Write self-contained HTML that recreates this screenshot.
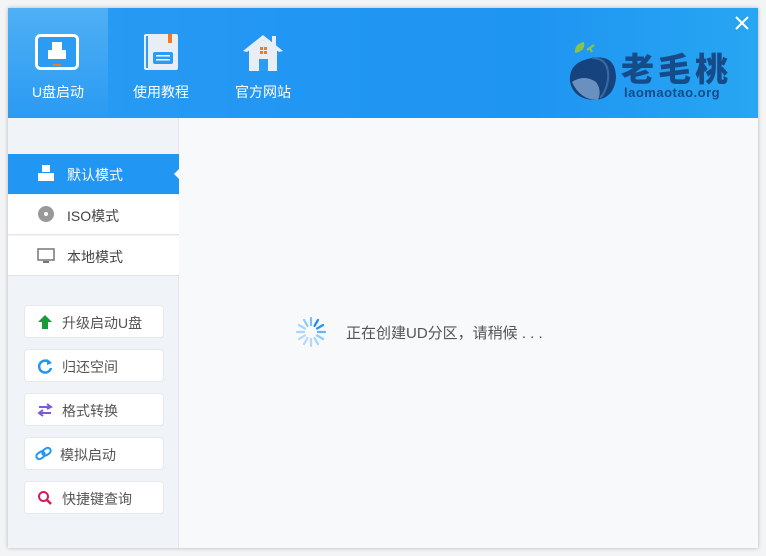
<!DOCTYPE html>
<html><head><meta charset="utf-8"><style>
*{margin:0;padding:0;box-sizing:border-box}
body{width:766px;height:556px;background:#f3f4f6;font-family:"Liberation Sans","Noto Sans CJK SC",sans-serif;position:relative;overflow:hidden}
.win{position:absolute;left:8px;top:8px;width:750px;height:540px;background:#f8f9fb;box-shadow:0 0 4px rgba(0,0,0,.25)}
.hdr{position:absolute;left:0;top:0;width:750px;height:110px;background:linear-gradient(90deg,#2a9cf3 0%,#2196f3 40%,#1f95f2 70%,#27a6f2 100%)}
.hl{position:absolute;left:0;top:0;width:100px;height:110px;background:linear-gradient(180deg,#4fb0f5,#2a9af3)}
.nav{position:absolute;top:0;height:110px;text-align:center;color:#fff;font-size:14px}
.nav span{position:absolute;left:0;right:0;top:74px}
.side{position:absolute;left:0;top:110px;width:171px;height:430px;background:#f0f3f7;border-right:1px solid #e2e6ea}
.mode{position:absolute;left:0;width:171px;height:40px;background:#fff;border-bottom:1px solid #e3e6ea;font-size:14px;color:#444}
.mode span{position:absolute;left:59px;top:11px}
.btn{position:absolute;left:16px;width:140px;height:33px;background:#fff;border:1px solid #e5e8ec;border-radius:4px;font-size:14px;color:#555}
.btn span{position:absolute;left:37px;top:7px}
.btn svg{position:absolute;left:12px;top:8px}
</style></head><body>
<div class="win">
<div class="hdr">
<div class="hl"></div>
<div class="nav" style="left:0;width:100px">
<svg width="46" height="40" style="position:absolute;left:27px;top:26px"><rect x="1.5" y="1.5" width="41" height="33" rx="4" fill="#2a9cf3" stroke="#fff" stroke-width="3"/><rect x="17" y="8" width="10" height="8" fill="#fff"/><rect x="13" y="16" width="18" height="9" fill="#fff"/><rect x="18" y="30" width="8" height="2" fill="#f07a28"/></svg>
<span>U盘启动</span></div>
<div class="nav" style="left:103px;width:100px">
<svg width="36" height="38" style="position:absolute;left:33px;top:26px"><rect x="0" y="0" width="34" height="36" rx="2" fill="#e8eef4"/><rect x="2" y="2" width="2" height="32" fill="#2a9cf3"/><rect x="24" y="0" width="4" height="9" fill="#f07a28"/><rect x="9" y="18" width="20" height="12" rx="2" fill="#2a9cf3"/><rect x="12" y="21" width="14" height="1.5" fill="#fff"/><rect x="12" y="25" width="14" height="1.5" fill="#fff"/></svg>
<span>使用教程</span></div>
<div class="nav" style="left:205px;width:100px">
<svg width="44" height="38" style="position:absolute;left:28px;top:26px"><rect x="31" y="2" width="4" height="10" fill="#e8eef4"/><path d="M2 17 L22 1 L42 17 L38 18 L22 6 L6 18Z" fill="#e8eef4"/><path d="M8 16 L22 6 L36 16 V37 H8Z" fill="#e8eef4"/><rect x="18" y="25" width="9" height="12" fill="#2a9cf3"/><rect x="19" y="13" width="3" height="3" fill="#f07a28"/><rect x="23" y="13" width="3" height="3" fill="#f07a28"/><rect x="19" y="17" width="3" height="3" fill="#f07a28"/><rect x="23" y="17" width="3" height="3" fill="#f07a28"/></svg>
<span>官方网站</span></div>
<svg width="52" height="64" style="position:absolute;left:560px;top:32px">
<path d="M7 13 Q6 4 16 2 Q18 11 7 13Z" fill="#8bc34a"/><path d="M19 10 L26 5 M22 8 L24 12" stroke="#8bc34a" stroke-width="2"/>
<path d="M24 18 Q48 14 48 38 Q46 58 28 60 Q6 60 2 42 Q0 22 24 18Z" fill="#16437e"/>
<path d="M24 18 Q42 18 40 40 Q38 52 32 58" fill="none" stroke="#3a6aa6" stroke-width="2"/>
<path d="M4 42 Q12 60 30 60 Q34 50 28 42 Q16 34 4 42Z" fill="#6a90bf"/>
</svg>
<div style="position:absolute;left:613px;top:44px;color:#164a88;font-size:33px;font-weight:900;letter-spacing:4px;line-height:36px">老毛桃</div>
<div style="position:absolute;left:616px;top:77px;color:#164a88;font-size:13px;font-weight:bold;letter-spacing:0.5px">laomaotao.org</div>
<svg width="14" height="14" style="position:absolute;left:727px;top:8px"><path d="M1 1 L13 13 M13 1 L1 13" stroke="#fff" stroke-width="2"/></svg>
</div>
<div class="side">
<div class="mode" style="top:36px;background:#2196f3;color:#fff;border:none"><svg width="20" height="18" style="position:absolute;left:29px;top:11px"><rect x="5" y="0" width="8" height="7" fill="#fff"/><rect x="1" y="8" width="16" height="8" fill="#fff"/></svg><span>默认模式</span><div style="position:absolute;right:0;top:15px;width:0;height:0;border-top:5px solid transparent;border-bottom:5px solid transparent;border-right:5px solid #f8f9fb"></div></div>
<div class="mode" style="top:77px"><svg width="18" height="18" style="position:absolute;left:30px;top:11px"><circle cx="8" cy="8" r="8" fill="#999"/><circle cx="8" cy="8" r="2" fill="#fff"/></svg><span>ISO模式</span></div>
<div class="mode" style="top:118px;border-bottom:1px solid #dde1e5"><svg width="20" height="18" style="position:absolute;left:29px;top:12px"><rect x="1" y="1" width="16" height="11" fill="none" stroke="#777" stroke-width="1.5"/><rect x="6" y="13" width="6" height="2" fill="#777"/></svg><span>本地模式</span></div>
<div class="btn" style="top:187px"><svg width="16" height="16"><path d="M8 1 L15 8 H11 V15 H5 V8 H1Z" fill="#1a9a3a"/></svg><span>升级启动U盘</span></div>
<div class="btn" style="top:231px"><svg width="16" height="16"><path d="M13 5 A6 6 0 1 0 14 10" fill="none" stroke="#2196f3" stroke-width="2.5"/><path d="M10 1 L15 5 L10 7Z" fill="#2196f3"/></svg><span>归还空间</span></div>
<div class="btn" style="top:275px"><svg width="16" height="16"><path d="M2 5 H13 M10 2 L14 5 L10 7 M14 11 H3 M6 8 L2 11 L6 14" fill="none" stroke="#7b5bd6" stroke-width="2"/></svg><span>格式转换</span></div>
<div class="btn" style="top:319px"><svg width="18" height="16" style="left:10px"><rect x="1" y="6" width="9" height="6" rx="3" transform="rotate(-35 6 9)" fill="none" stroke="#2196f3" stroke-width="2"/><rect x="7" y="3" width="9" height="6" rx="3" transform="rotate(-35 11 6)" fill="none" stroke="#2196f3" stroke-width="2"/></svg><span style="left:35px">模拟启动</span></div>
<div class="btn" style="top:363px"><svg width="16" height="16"><circle cx="6.5" cy="6.5" r="4.5" fill="none" stroke="#d81b60" stroke-width="2"/><path d="M10 10 L14 14" stroke="#d81b60" stroke-width="2.5"/></svg><span>快捷键查询</span></div>
</div>
<svg width="34" height="34" style="position:absolute;left:286px;top:307px" viewBox="-17 -17 34 34" stroke-width="2.2" stroke-linecap="round">
<line x1="0" y1="-7" x2="0" y2="-14" stroke="#7cc0f3"/>
<line x1="3.5" y1="-6.06" x2="7" y2="-12.1" stroke="#1e88e5"/>
<line x1="6.06" y1="-3.5" x2="12.1" y2="-7" stroke="#2196f3"/>
<line x1="7" y1="0" x2="14" y2="0" stroke="#64b5f6"/>
<line x1="6.06" y1="3.5" x2="12.1" y2="7" stroke="#90caf9"/>
<line x1="3.5" y1="6.06" x2="7" y2="12.1" stroke="#a8d5f8"/>
<line x1="0" y1="7" x2="0" y2="14" stroke="#b3dbf9"/>
<line x1="-3.5" y1="6.06" x2="-7" y2="12.1" stroke="#b3dbf9"/>
<line x1="-6.06" y1="3.5" x2="-12.1" y2="7" stroke="#b3dbf9"/>
<line x1="-7" y1="0" x2="-14" y2="0" stroke="#a8d5f8"/>
<line x1="-6.06" y1="-3.5" x2="-12.1" y2="-7" stroke="#a8d5f8"/>
<line x1="-3.5" y1="-6.06" x2="-7" y2="-12.1" stroke="#90caf9"/>
</svg>
<div style="position:absolute;left:338px;top:314px;font-size:15px;color:#555">正在创建UD分区，请稍候 . . .</div>
</div>
</body></html>
